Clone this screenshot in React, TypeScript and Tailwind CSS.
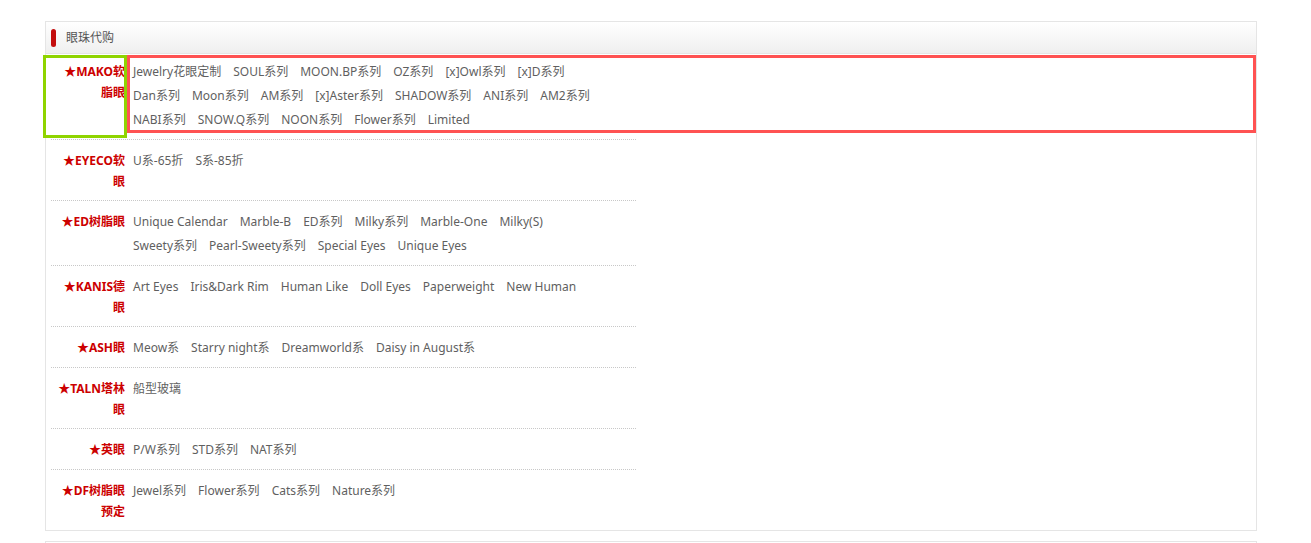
import React from "react";

interface Brand {
  label: string[];
  lines: string[][];
}

const brands: Brand[] = [
  {
    label: ["★MAKO软", "脂眼"],
    lines: [
      ["Jewelry花眼定制", "SOUL系列", "MOON.BP系列", "OZ系列", "[x]Owl系列", "[x]D系列"],
      ["Dan系列", "Moon系列", "AM系列", "[x]Aster系列", "SHADOW系列", "ANI系列", "AM2系列"],
      ["NABI系列", "SNOW.Q系列", "NOON系列", "Flower系列", "Limited"],
    ],
  },
  { label: ["★EYECO软", "眼"], lines: [["U系-65折", "S系-85折"]] },
  {
    label: ["★ED树脂眼"],
    lines: [
      ["Unique Calendar", "Marble-B", "ED系列", "Milky系列", "Marble-One", "Milky(S)"],
      ["Sweety系列", "Pearl-Sweety系列", "Special Eyes", "Unique Eyes"],
    ],
  },
  {
    label: ["★KANIS德", "眼"],
    lines: [["Art Eyes", "Iris&Dark Rim", "Human Like", "Doll Eyes", "Paperweight", "New Human"]],
  },
  { label: ["★ASH眼"], lines: [["Meow系", "Starry night系", "Dreamworld系", "Daisy in August系"]] },
  { label: ["★TALN塔林", "眼"], lines: [["船型玻璃"]] },
  { label: ["★英眼"], lines: [["P/W系列", "STD系列", "NAT系列"]] },
  { label: ["★DF树脂眼", "预定"], lines: [["Jewel系列", "Flower系列", "Cats系列", "Nature系列"]] },
];

const font = { fontFamily: '"Noto Sans", "Noto Sans CJK SC", sans-serif' };

export default function App() {
  return (
    <div className="bg-white min-h-[543px] pt-[21px] px-[45px] text-[12px]" style={font}>
      <div className="relative border border-[#e5e5e5] w-[1212px]">
        {/* header */}
        <div className="h-[32px] flex items-center border-b border-[#e5e5e5] bg-gradient-to-b from-[#ffffff] to-[#efefef] pl-[5px]">
          <span className="block w-[5px] h-[18px] rounded-full bg-[#c30d0d]" />
          <span className="ml-[10px] text-[#555]">眼珠代购</span>
        </div>

        {/* list */}
        <div className="pl-[5px]">
          {brands.map((b, i) => (
            <div
              key={i}
              className={`flex w-[585px] ${i === 0 ? "pt-[6px]" : "pt-[9px]"} ${
                i === brands.length - 1 ? "pb-[7px]" : "pb-[7px] border-b border-dotted border-[#c8c8c8]"
              }`}
            >
              <div className="w-[74px] shrink-0 text-right font-bold text-[#cc0000] leading-[21px] py-[1px]">
                {b.label.map((l) => (
                  <div key={l} className="whitespace-nowrap">
                    {l}
                  </div>
                ))}
              </div>
              <div className="pl-[8px]">
                {b.lines.map((line, j) => (
                  <div key={j} className="flex gap-[12px] leading-[24px] whitespace-nowrap">
                    {line.map((item) => (
                      <a key={item} className="text-[#5f5f5f]">
                        {item}
                      </a>
                    ))}
                  </div>
                ))}
              </div>
            </div>
          ))}
        </div>

        {/* annotation boxes */}
        <div className="absolute left-[-3px] top-[33px] w-[84px] h-[83px] border-[3px] border-[#8fd400] pointer-events-none" />
        <div className="absolute left-[81px] top-[33px] w-[1129px] h-[78px] border-[3px] border-[#ff5252] pointer-events-none" />
      </div>
      <div className="mt-[10px] border-t border-x border-[#e5e5e5] w-[1212px] h-[4px]" />
    </div>
  );
}
